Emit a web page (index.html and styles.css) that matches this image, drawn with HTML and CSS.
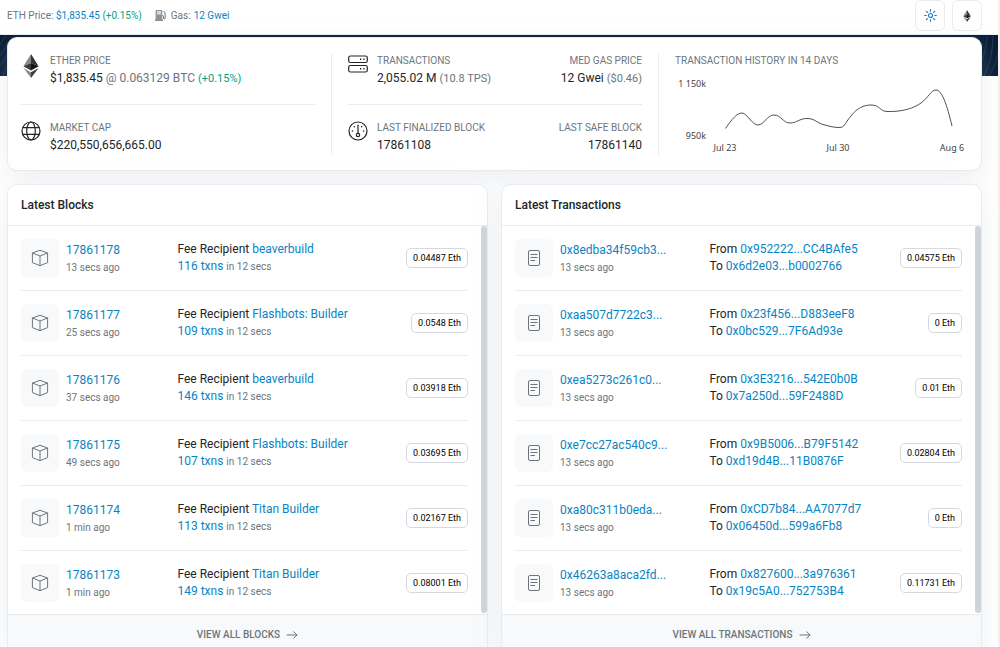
FILE: index.html
```html
<!DOCTYPE html>
<html lang="en">
<head>
<meta charset="utf-8">
<meta name="viewport" content="width=device-width, initial-scale=1">
<title>Ethereum Explorer</title>
<link rel="stylesheet" href="styles.css">
</head>
<body>
<svg class="sprite" aria-hidden="true">
  <symbol id="eth" viewBox="0 0 16 24">
    <path fill="#8a8a8a" d="M8 0 0.4 12.3 8 9z"/><path fill="#343434" d="M8 0v9l7.6 3.3z"/>
    <path fill="#3c3c3b" d="M.4 12.3 8 16.6V9z"/><path fill="#141414" d="M15.6 12.3 8 16.6V9z"/>
    <path fill="#8c8c8c" d="M.4 13.9 8 24v-5.8z"/><path fill="#3c3c3b" d="M15.6 13.9 8 24v-5.8z"/>
  </symbol>
  <symbol id="cube" viewBox="0 0 18 18">
    <path fill="none" stroke="currentColor" stroke-linejoin="round" d="M9 1.3 16.6 4v9.600L9 16.700l-7.600-3.100V4zM1.400 4 9 7l7.600-3M9 7v9.700"/>
  </symbol>
  <symbol id="doc" viewBox="0 0 14 18">
    <rect x="1.5" y="1.5" width="11" height="15" rx="1.5" fill="none" stroke="currentColor"/>
    <path stroke="currentColor" d="M3.500 5.500h7M3.500 8.500h7M3.500 11.500h4.500"/>
  </symbol>
  <symbol id="arrow" viewBox="0 0 12 10">
    <path fill="none" stroke="currentColor" stroke-linecap="round" stroke-linejoin="round" d="M1 5h10M7.700 1.800 11 5 7.700 8.200"/>
  </symbol>
</svg>
<div class="page">
  <header class="topbar">
    <div class="topbar-info">
      <span>ETH Price: <a href="#">$1,835.45</a> <span class="up">(+0.15%)</span></span>
      <span class="gas"><svg class="pump" viewBox="0 0 11 11" aria-hidden="true"><path fill="#8c949b" fill-rule="evenodd" d="M1.500 0h4.800q1 0 1 1v8.600h.7V11H0V9.600h.6V1q0-1 .9-1zM2 1.300v3h4v-3z"/><path fill="#d3d7da" d="M2 1.300h4v3H2z"/><path fill="none" stroke="#6c757d" d="M7.500 5.500q1 0 1 1v1.600q0 .9.800.9t.800-.9V3L8.500 1"/></svg>Gas: <a href="#">12 Gwei</a></span>
    </div>
    <div class="topbar-actions">
      <button type="button" class="icon-btn" aria-label="Theme"><svg width="13" height="13" viewBox="0 0 13 13" aria-hidden="true"><g fill="none" stroke="#0784c3" stroke-width="1.200"><circle cx="6.500" cy="6.500" r="2"/><path stroke-linecap="round" d="M6.500.700v1.500M6.500 10.800v1.500M.700 6.500h1.500M10.800 6.500h1.500M2.400 2.400l1 1M9.600 9.600l1 1M10.600 2.400l-1 1M3.400 9.600l-1 1"/></g></svg></button>
      <button type="button" class="icon-btn" aria-label="Network"><svg width="8" height="12" aria-hidden="true"><use href="#eth"/></svg></button>
    </div>
  </header>
  <div class="hero">
    <svg class="hero-art" viewBox="0 0 998 41" preserveAspectRatio="xMaxYMid slice" aria-hidden="true"><g fill="none" stroke="#1d3450"><path d="M-2 24 12 2M-2 34 18 2M-3 14 6 0M2 41 14 20"/><path d="M984 41Q993 24 993 0M989 41Q998 28 999 8M982 26Q987 13 987 0"/></g></svg>
  </div>
  <main class="container">
    <section class="card stats">
      <div class="stat-col">
        <div class="stat">
          <svg class="stat-icon tall" viewBox="0 0 20 24" aria-hidden="true"><use href="#eth" x="2" y="0" width="16" height="24"/></svg>
          <div><div class="label">ETHER PRICE</div><div class="value"><a class="plain" href="#">$1,835.45</a> <span class="muted">@ 0.063129 BTC</span> <span class="note up">(+0.15%)</span></div></div>
        </div>
        <hr>
        <div class="stat">
          <svg class="stat-icon" viewBox="0 0 20 20" aria-hidden="true"><g fill="none" stroke="#212529" stroke-width="1.200"><circle cx="10" cy="10" r="9"/><ellipse cx="10" cy="10" rx="4.300" ry="9"/><path d="M1.700 6.700h16.600M1.700 13.300h16.600"/></g></svg>
          <div><div class="label">MARKET CAP</div><div class="value"><a class="plain" href="#">$220,550,656,665.00</a></div></div>
        </div>
      </div>
      <div class="stat-col">
        <div class="stat">
          <svg class="stat-icon" viewBox="0 0 20 20" aria-hidden="true"><g fill="none" stroke="#212529" stroke-width="1.200"><rect x=".7" y="2" width="18.600" height="6.500" rx="1.800"/><rect x=".7" y="11.500" width="18.600" height="6.500" rx="1.800"/></g><path fill="#212529" d="M12 4.600h1.300v1.300H12zM15.300 4.600h1.300v1.300h-1.300zM12 14.100h1.300v1.300H12zM15.300 14.100h1.300v1.300h-1.300z"/></svg>
          <div><div class="label">TRANSACTIONS</div><div class="value"><a class="plain" href="#">2,055.02 M</a> <span class="note">(10.8 TPS)</span></div></div>
          <div class="end"><div class="label">MED GAS PRICE</div><div class="value"><a class="plain" href="#">12 Gwei</a> <span class="note">($0.46)</span></div></div>
        </div>
        <hr>
        <div class="stat">
          <svg class="stat-icon" viewBox="0 0 20 20" aria-hidden="true"><g fill="none" stroke="#212529" stroke-width="1.200"><circle cx="10" cy="10" r="9"/><circle cx="10" cy="14" r="1.700"/><path stroke-linecap="round" d="M10 4.200v8"/></g><g fill="#212529"><circle cx="6.300" cy="5.800" r=".8"/><circle cx="13.700" cy="5.800" r=".8"/><circle cx="4.400" cy="10" r=".8"/><circle cx="15.600" cy="10" r=".8"/></g></svg>
          <div><div class="label">LAST FINALIZED BLOCK</div><div class="value"><a class="plain" href="#">17861108</a></div></div>
          <div class="end"><div class="label">LAST SAFE BLOCK</div><div class="value"><a class="plain" href="#">17861140</a></div></div>
        </div>
      </div>
      <div class="stat-col">
        <div class="label">TRANSACTION HISTORY IN 14 DAYS</div>
        <svg class="chart" viewBox="0 0 294 77" role="img" aria-label="Transaction history in 14 days">
          <g class="axis"><text x="31" y="10" text-anchor="end">1 150k</text><text x="31" y="62" text-anchor="end">950k</text><text x="50" y="74" text-anchor="middle">Jul 23</text><text x="163" y="74" text-anchor="middle">Jul 30</text><text x="277" y="74" text-anchor="middle">Aug 6</text></g>
          <path class="line" d="M50.500 51.500C57 42 62 36 67 36S77 48 83 48S92 38 99 38S108 46 115 46S124 41.500 132 41.500S142 46 148 47.500S158 50.500 164 50.500C170 50.500 169 47 176 39C182 31 189 28 196 28C205 28 205 34.500 212 34.500C228 35 239 31 246 26C254 20 256 13 261 13C267 13 272 28 277 49"/>
        </svg>
      </div>
    </section>
    <div class="columns">
      <section class="card list-card blocks">
        <h2>Latest Blocks</h2>
        <div class="list">
          <div class="row"><div class="id"><span class="tile"><svg width="18" height="18" aria-hidden="true"><use href="#cube"/></svg></span><div><a href="#">17861178</a><small>13 secs ago</small></div></div><div class="detail"><div>Fee Recipient <a href="#">beaverbuild</a></div><div><a href="#">116 txns</a> <small>in 12 secs</small></div></div><span class="badge">0.04487 Eth</span></div>
          <div class="row"><div class="id"><span class="tile"><svg width="18" height="18" aria-hidden="true"><use href="#cube"/></svg></span><div><a href="#">17861177</a><small>25 secs ago</small></div></div><div class="detail"><div>Fee Recipient <a href="#">Flashbots: Builder</a></div><div><a href="#">109 txns</a> <small>in 12 secs</small></div></div><span class="badge">0.0548 Eth</span></div>
          <div class="row"><div class="id"><span class="tile"><svg width="18" height="18" aria-hidden="true"><use href="#cube"/></svg></span><div><a href="#">17861176</a><small>37 secs ago</small></div></div><div class="detail"><div>Fee Recipient <a href="#">beaverbuild</a></div><div><a href="#">146 txns</a> <small>in 12 secs</small></div></div><span class="badge">0.03918 Eth</span></div>
          <div class="row"><div class="id"><span class="tile"><svg width="18" height="18" aria-hidden="true"><use href="#cube"/></svg></span><div><a href="#">17861175</a><small>49 secs ago</small></div></div><div class="detail"><div>Fee Recipient <a href="#">Flashbots: Builder</a></div><div><a href="#">107 txns</a> <small>in 12 secs</small></div></div><span class="badge">0.03695 Eth</span></div>
          <div class="row"><div class="id"><span class="tile"><svg width="18" height="18" aria-hidden="true"><use href="#cube"/></svg></span><div><a href="#">17861174</a><small>1 min ago</small></div></div><div class="detail"><div>Fee Recipient <a href="#">Titan Builder</a></div><div><a href="#">113 txns</a> <small>in 12 secs</small></div></div><span class="badge">0.02167 Eth</span></div>
          <div class="row"><div class="id"><span class="tile"><svg width="18" height="18" aria-hidden="true"><use href="#cube"/></svg></span><div><a href="#">17861173</a><small>1 min ago</small></div></div><div class="detail"><div>Fee Recipient <a href="#">Titan Builder</a></div><div><a href="#">149 txns</a> <small>in 12 secs</small></div></div><span class="badge">0.08001 Eth</span></div>
        </div>
        <a class="view-all" href="#">VIEW ALL BLOCKS <svg width="12" height="10" aria-hidden="true"><use href="#arrow"/></svg></a>
      </section>
      <section class="card list-card txs">
        <h2>Latest Transactions</h2>
        <div class="list">
          <div class="row"><div class="id"><span class="tile"><svg width="14" height="18" aria-hidden="true"><use href="#doc"/></svg></span><div><a href="#">0x8edba34f59cb3...</a><small>13 secs ago</small></div></div><div class="detail"><div>From <a href="#">0x952222...CC4BAfe5</a></div><div>To <a href="#">0x6d2e03...b0002766</a></div></div><span class="badge">0.04575 Eth</span></div>
          <div class="row"><div class="id"><span class="tile"><svg width="14" height="18" aria-hidden="true"><use href="#doc"/></svg></span><div><a href="#">0xaa507d7722c3...</a><small>13 secs ago</small></div></div><div class="detail"><div>From <a href="#">0x23f456...D883eeF8</a></div><div>To <a href="#">0x0bc529...7F6Ad93e</a></div></div><span class="badge">0 Eth</span></div>
          <div class="row"><div class="id"><span class="tile"><svg width="14" height="18" aria-hidden="true"><use href="#doc"/></svg></span><div><a href="#">0xea5273c261c0...</a><small>13 secs ago</small></div></div><div class="detail"><div>From <a href="#">0x3E3216...542E0b0B</a></div><div>To <a href="#">0x7a250d...59F2488D</a></div></div><span class="badge">0.01 Eth</span></div>
          <div class="row"><div class="id"><span class="tile"><svg width="14" height="18" aria-hidden="true"><use href="#doc"/></svg></span><div><a href="#">0xe7cc27ac540c9...</a><small>13 secs ago</small></div></div><div class="detail"><div>From <a href="#">0x9B5006...B79F5142</a></div><div>To <a href="#">0xd19d4B...11B0876F</a></div></div><span class="badge">0.02804 Eth</span></div>
          <div class="row"><div class="id"><span class="tile"><svg width="14" height="18" aria-hidden="true"><use href="#doc"/></svg></span><div><a href="#">0xa80c311b0eda...</a><small>13 secs ago</small></div></div><div class="detail"><div>From <a href="#">0xCD7b84...AA7077d7</a></div><div>To <a href="#">0x06450d...599a6Fb8</a></div></div><span class="badge">0 Eth</span></div>
          <div class="row"><div class="id"><span class="tile"><svg width="14" height="18" aria-hidden="true"><use href="#doc"/></svg></span><div><a href="#">0x46263a8aca2fd...</a><small>13 secs ago</small></div></div><div class="detail"><div>From <a href="#">0x827600...3a976361</a></div><div>To <a href="#">0x19c5A0...752753B4</a></div></div><span class="badge">0.11731 Eth</span></div>
        </div>
        <a class="view-all" href="#">VIEW ALL TRANSACTIONS <svg width="12" height="10" aria-hidden="true"><use href="#arrow"/></svg></a>
      </section>
    </div>
  </main>
</div>
</body>
</html>
```
FILE: styles.css
```css
* { box-sizing: border-box; }
html { overflow: hidden; }
body {
  margin: 0;
  background: #fff;
  color: #212529;
  font: 12px/17px Roboto, "Liberation Sans", sans-serif;
}
a { color: #0784c3; text-decoration: none; }
small { font-size: 10px; color: #6c757d; }
.sprite { position: absolute; width: 0; height: 0; }
.page { border-right: 2px solid #f1f1f1; min-height: 100vh; }
.up { color: #00a186; }
.muted { color: #6c757d; }

.topbar {
  display: flex;
  justify-content: space-between;
  align-items: flex-start;
  height: 35px;
  padding: 0 16px 0 7px;
  border-bottom: 1px solid #e9ecef;
  font-size: 10px;
  color: #6c757d;
}
.topbar-info { display: flex; align-items: center; gap: 13px; height: 31px; }
.gas { display: flex; align-items: center; gap: 3px; }
.pump { width: 11px; height: 11px; margin-right: 2px; }
.topbar-actions { display: flex; gap: 7px; }
.icon-btn {
  display: flex;
  align-items: center;
  justify-content: center;
  width: 30px;
  height: 31px;
  padding: 0;
  background: #fff;
  border: 1px solid #e9ecef;
  border-radius: 6px;
}

.hero { height: 41px; background: #081d35; }
.hero-art { display: block; width: 100%; height: 100%; }

.container { padding: 0 16px 0 7px; margin-top: -39px; position: relative; }
.card {
  background: #fff;
  border: 1px solid #e9ecef;
  border-radius: 10px;
  box-shadow: 0 8px 24px rgba(189, 197, 209, 0.25);
}

.stats {
  display: grid;
  grid-template-columns: minmax(0, 323fr) minmax(0, 327fr) minmax(0, 323fr);
  padding: 16px 0 15px;
}
.stat-col { padding: 0 16px; }
.stat-col:first-child { padding-left: 13px; }
.stat-col:last-child { padding-right: 12px; }
.stat-col + .stat-col { border-left: 1px solid #e9ecef; }
.stat { display: flex; gap: 9px; height: 34px; }
.stat-icon { flex: none; width: 20px; height: 20px; }
.stat-icon.tall { height: 24px; }
.end { margin-left: auto; text-align: right; }
.label { font-size: 10px; line-height: 13px; color: #6c757d; }
.value { line-height: 22px; }
.plain { color: #212529; }
.note { font-size: 11px; color: #6c757d; }
.note.up { color: #00a186; }
hr { margin: 16px 0; border: 0; border-top: 1px solid #e9ecef; }
.chart { display: block; width: 100%; margin-top: 10px; }
.axis { font: 9px "Noto Sans", "Open Sans", sans-serif; fill: #444; }
.line { fill: none; stroke: #4d5257; stroke-width: 1; }

.columns { display: grid; grid-template-columns: repeat(2, minmax(0, 1fr)); gap: 13px; margin-top: 13px; }
.list-card { overflow: hidden; }
h2 {
  margin: 0;
  padding: 0 13px;
  font-size: 12px;
  font-weight: 500;
  line-height: 40px;
  border-bottom: 1px solid #e9ecef;
}
.list { position: relative; padding: 0 19px 0 13px; }
.list::after {
  content: "";
  position: absolute;
  top: 0;
  right: 0;
  bottom: 1px;
  width: 6px;
  border-radius: 3px;
  background: #ced4da;
}
.row { display: flex; align-items: center; padding: 13px 0; }
.row + .row { border-top: 1px solid #e9ecef; }
.row:last-child { padding-bottom: 12px; }
.id { display: flex; align-items: center; gap: 7px; flex: none; width: 35%; }
.txs .id { width: 43.5%; }
.id a, .id small { display: block; }
.id a { line-height: 18px; }
.tile {
  display: flex;
  align-items: center;
  justify-content: center;
  width: 38px;
  height: 38px;
  border-radius: 6px;
  background: #f8f9fa;
  color: #6c757d;
}
.detail { flex: 1; white-space: nowrap; }
.badge {
  padding: 0 6px;
  border: 1px solid #d5dae0;
  border-radius: 5px;
  font-size: 9px;
  line-height: 18px;
  color: #000;
}
.view-all {
  display: flex;
  align-items: center;
  justify-content: center;
  gap: 6px;
  height: 40px;
  border-top: 1px solid #e9ecef;
  background: #f8f9fa;
  color: #6c757d;
  font-size: 10px;
  font-weight: 500;
}
```
